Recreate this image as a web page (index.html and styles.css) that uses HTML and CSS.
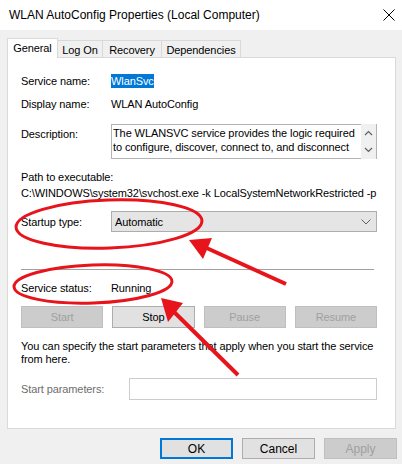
FILE: index.html
```html
<!DOCTYPE html>
<html>
<head>
<meta charset="utf-8">
<link rel="stylesheet" href="styles.css">
</head>
<body>
<div class="window">
  <div class="titlebar">
    <span class="title">WLAN AutoConfig Properties (Local Computer)</span>
    <svg class="close" width="12" height="12" viewBox="0 0 12 12"><path d="M0.5 0.5 L11.5 11.5 M11.5 0.5 L0.5 11.5" stroke="#000" stroke-width="1" fill="none"/></svg>
  </div>
  <div class="content">
    <div class="tabs">
      <div class="tab active t-general">General</div>
      <div class="tab t-logon">Log On</div>
      <div class="tab t-recovery">Recovery</div>
      <div class="tab t-deps">Dependencies</div>
    </div>
    <div class="panel">
      <div class="row r-name"><span class="label">Service name:</span><span class="value"><span class="sel">WlanSvc</span></span></div>
      <div class="row r-display"><span class="label">Display name:</span><span class="value">WLAN AutoConfig</span></div>
      <div class="row r-desc">
        <span class="label">Description:</span>
        <div class="textbox">
          <div class="tb-text">The WLANSVC service provides the logic required<br>to configure, discover, connect to, and disconnect</div>
          <div class="scrollbar">
            <svg width="15" height="35" viewBox="0 0 15 35"><path d="M4 11 L7.5 7.5 L11 11" stroke="#606060" stroke-width="1.2" fill="none"/><path d="M4 24 L7.5 27.5 L11 24" stroke="#606060" stroke-width="1.2" fill="none"/></svg>
          </div>
        </div>
      </div>
      <div class="path-label">Path to executable:</div>
      <div class="path-value">C:\WINDOWS\system32\svchost.exe -k LocalSystemNetworkRestricted -p</div>
      <div class="row r-startup">
        <span class="label">Startup type:</span>
        <div class="combo"><span>Automatic</span>
          <svg width="10" height="6" viewBox="0 0 10 6"><path d="M0.5 0.5 L5 5 L9.5 0.5" stroke="#606060" stroke-width="1" fill="none"/></svg>
        </div>
      </div>
      <div class="separator"></div>
      <div class="row r-status"><span class="label">Service status:</span><span class="value">Running</span></div>
      <div class="btn-row">
        <div class="btn disabled">Start</div>
        <div class="btn">Stop</div>
        <div class="btn disabled">Pause</div>
        <div class="btn disabled">Resume</div>
      </div>
      <div class="note">You can specify the start parameters that apply when you start the service<br>from here.</div>
      <div class="row r-params">
        <span class="label muted">Start parameters:</span>
        <div class="input"></div>
      </div>
    </div>
    <div class="footer">
      <div class="btn fbtn default">OK</div>
      <div class="btn fbtn">Cancel</div>
      <div class="btn fbtn disabled">Apply</div>
    </div>
  </div>
  <svg class="annot" width="402" height="464" viewBox="0 0 402 464">
    <g fill="none" stroke="#e8141c" stroke-width="3">
      <ellipse cx="109" cy="224" rx="93" ry="24" transform="rotate(-2 109 224)"/>
      <ellipse cx="93" cy="284" rx="79" ry="19" transform="rotate(-2 93 284)"/>
      <line x1="286" y1="284" x2="200" y2="245" stroke-width="4"/>
      <line x1="238" y1="375" x2="170" y2="308" stroke-width="4"/>
    </g>
    <g fill="#e8141c">
      <polygon points="189,240 212,238 203,259"/>
      <polygon points="161,298 183,303 168,322"/>
    </g>
  </svg>
</div>
</body>
</html>
```
FILE: styles.css
```css
* { box-sizing: border-box; }
html, body { margin: 0; padding: 0; }
body {
  background: #f0f0f0;
  font-family: "Liberation Sans", Arial, sans-serif;
  font-size: 11px;
  letter-spacing: -0.1px;
  color: #000;
  width: 402px;
  height: 464px;
  overflow: hidden;
}
.window { position: relative; width: 402px; height: 464px; }
.titlebar {
  height: 30px;
  background: #fff;
  display: flex;
  align-items: center;
  justify-content: space-between;
  padding: 0 7px 0 9px;
}
.title { font-size: 12px; letter-spacing: 0; }
.content { padding: 8px 0 0 7px; }
.tabs {
  display: flex;
  align-items: flex-end;
  height: 20px;
  position: relative;
  z-index: 1;
}
.tab {
  height: 18px;
  border: 1px solid #d9d9d9;
  background: #f0f0f0;
  display: flex;
  align-items: center;
  justify-content: center;
  margin-left: -1px;
  padding-top: 1px;
}
.tab.active {
  height: 20px;
  background: #fff;
  border-bottom: none;
  margin-left: 0;
  padding-top: 0;
  padding-bottom: 1px;
  z-index: 2;
}
.t-general { width: 51px; }
.t-logon { width: 46px; }
.t-recovery { width: 60px; }
.t-deps { width: 80px; }
.panel {
  margin-top: -1px;
  width: 389px;
  height: 372px;
  background: #fff;
  border: 1px solid #d9d9d9;
  padding: 15px 0 0 13px;
  display: flex;
  flex-direction: column;
}
.row { display: flex; align-items: center; }
.label { width: 90px; flex: none; }
.muted { color: #6d6d6d; }
.r-name, .r-display, .r-status { height: 16px; }
.r-display { margin-top: 7px; }
.sel { background: #0078d7; color: #fff; padding: 1px 0 1px 0; }
.r-desc { margin-top: 12px; align-items: flex-start; }
.r-desc .label { padding-top: 4px; }
.textbox {
  width: 266px;
  height: 35px;
  border: 1px solid #b4b4b4;
  display: flex;
  justify-content: space-between;
}
.tb-text { padding: 1px 0 0 1px; line-height: 14px; }
.scrollbar { width: 15px; background: #f0f0f0; margin: -1px 0; }
.scrollbar svg { display: block; }
.path-label { margin-top: 10px; height: 16px; line-height: 16px; }
.path-value { height: 16px; line-height: 16px; white-space: nowrap; }
.r-startup { margin-top: 10px; }
.combo {
  width: 266px;
  height: 21px;
  background: #e5e5e5;
  border: 1px solid #adadad;
  display: flex;
  align-items: center;
  justify-content: space-between;
  padding: 0 5px 0 3px;
}
.separator { margin-top: 37px; width: 353px; height: 1px; background: #a0a0a0; }
.r-status { margin-top: 10px; }
.btn-row {
  margin-top: 10px;
  width: 356px;
  display: grid;
  grid-template-columns: repeat(4, 1fr);
  gap: 9px;
}
.btn {
  height: 22px;
  background: #e1e1e1;
  border: 1px solid #adadad;
  display: flex;
  align-items: center;
  justify-content: center;
}
.btn.disabled { background: #cccccc; border-color: #bfbfbf; color: #a0a0a0; }
.note { margin-top: 12px; line-height: 12.5px; }
.r-params { margin-top: 13px; }
.r-params .label { width: 108px; }
.input { width: 248px; height: 22px; border: 1px solid #cccccc; background: #fff; }
.footer {
  margin-top: 9px;
  display: flex;
  justify-content: flex-end;
  gap: 9px;
  padding-right: 5px;
}
.fbtn { width: 73px; height: 21px; font-size: 12px; letter-spacing: 0; }
.fbtn.default { border-color: #0078d7; box-shadow: inset 0 0 0 1px #0078d7; }
.annot { position: absolute; left: 0; top: 0; pointer-events: none; }
```
